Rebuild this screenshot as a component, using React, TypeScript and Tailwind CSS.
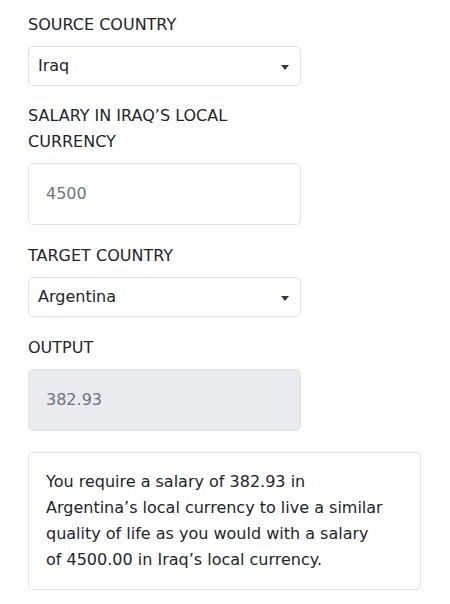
import React from "react";

const font = { fontFamily: '"DejaVu Sans", "Open Sans", sans-serif' };

function Caret() {
  return (
    <svg width="8" height="5" viewBox="0 0 8 5" className="absolute right-[11px] top-[18px]">
      <path d="M0 0 L8 0 L4 5 Z" fill="#343a40" />
    </svg>
  );
}

function Select({ value }: { value: string }) {
  return (
    <div className="relative w-[273px] h-[40px] rounded-[5px] border border-[#dfe1e5] bg-white flex items-center pl-[9px] text-[16px] text-[#212529]">
      {value}
      <Caret />
    </div>
  );
}

export default function App() {
  return (
    <div style={font} className="bg-white w-[450px] min-h-[604px] px-[28px] pt-[12px] text-[#212529]">
      <div className="text-[16px] leading-[26px] mb-[8px]">SOURCE COUNTRY</div>
      <Select value="Iraq" />
      <div className="text-[16px] leading-[26px] mt-[17px] mb-[8px]">
        SALARY IN IRAQ’S LOCAL
        <br />
        CURRENCY
      </div>
      <div className="w-[273px] h-[62px] rounded-[5px] border border-[#e2e3e6] bg-white flex items-center pl-[17px] text-[16px] text-[#6c757d]">
        4500
      </div>
      <div className="text-[16px] leading-[26px] mt-[18px] mb-[8px]">TARGET COUNTRY</div>
      <Select value="Argentina" />
      <div className="text-[16px] leading-[26px] mt-[18px] mb-[8px]">OUTPUT</div>
      <div className="w-[273px] h-[62px] rounded-[5px] border border-[#e2e3e6] bg-[#e9ebef] flex items-center pl-[17px] text-[16px] text-[#6c757d]">
        382.93
      </div>
      <div className="mt-[21px] w-[393px] h-[138px] rounded-[4px] border border-[#e2e3e6] pl-[17px] pt-[16px] text-[16px] leading-[26px] whitespace-nowrap text-[#212529]">
        You require a salary of 382.93 in
        <br />
        Argentina’s local currency to live a similar
        <br />
        quality of life as you would with a salary
        <br />
        of 4500.00 in Iraq’s local currency.
      </div>
    </div>
  );
}
